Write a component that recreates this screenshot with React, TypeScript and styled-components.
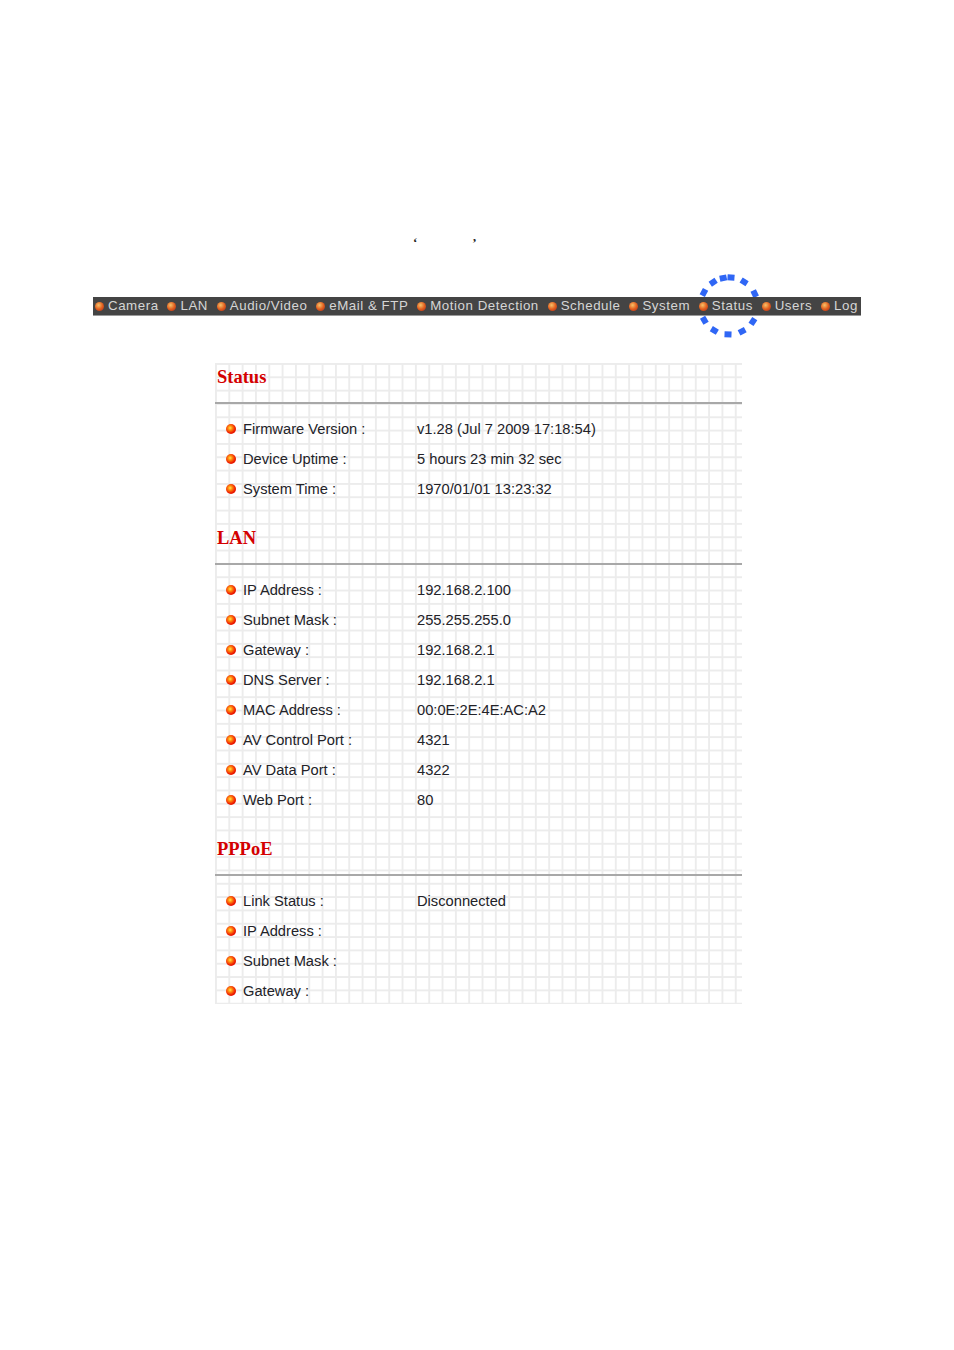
import React from "react";
import styled, { createGlobalStyle } from "styled-components";

const Global = createGlobalStyle`
  html, body { margin: 0; padding: 0; background: #ffffff; }
  body { font-family: "Liberation Sans", Arial, sans-serif; }
`;

const Page = styled.div`
  width: 954px;
  height: 1350px;
  padding-top: 236px;
  box-sizing: border-box;
  display: flex;
  flex-direction: column;
`;

const Marks = styled.div`
  height: 14px;
  padding-left: 413px;
  display: flex;
  gap: 55px;
  font-family: "Liberation Serif", serif;
  font-weight: bold;
  font-size: 13px;
  line-height: 14px;
  color: #222;
`;

const NavWrap = styled.div`
  position: relative;
  margin: 47px 0 0 93px;
  width: 768px;
`;

const NavBar = styled.nav`
  position: relative;
  z-index: 1;
  height: 18px;
  background: #444444;
  border-bottom: 1px solid #9a9a9a;
  display: flex;
  align-items: center;
  justify-content: space-between;
  padding: 0 3px 0 2px;
`;

const NavItem = styled.div`
  position: relative;
  display: flex;
  align-items: center;
  gap: 4px;
  font-size: 13.3px;
  letter-spacing: 0.55px;
  color: #d6d6d6;
  line-height: 18px;
  white-space: nowrap;
`;

const NavDot = styled.span`
  width: 9px;
  height: 9px;
  border-radius: 50%;
  flex: none;
  background: radial-gradient(circle at 40% 35%, #f6c26a 0%, #e2601f 50%, #a8261a 100%);
`;

const Halo = styled.svg`
  position: absolute;
  z-index: 0;
  left: 601px;
  top: -26px;
  width: 70px;
  height: 70px;
  overflow: visible;
`;

const Panel = styled.section`
  margin: 47px 0 0 215px;
  width: 527px;
  height: 641px;
  box-sizing: border-box;
  background-color: #ffffff;
  background-image:
    linear-gradient(to right, #ececec 1.5px, transparent 1.5px),
    linear-gradient(to bottom, #ececec 1.5px, transparent 1.5px);
  background-size: 13.33px 13.33px;
  background-position: 0 0;
  display: flex;
  flex-direction: column;
`;

const Section = styled.div<{ $first?: boolean }>`
  display: flex;
  flex-direction: column;
  margin-top: ${(p) => (p.$first ? "0" : "20px")};
`;

const Heading = styled.h2`
  margin: 0;
  height: 28px;
  padding-left: 2px;
  font-family: "Liberation Serif", "Times New Roman", serif;
  font-weight: bold;
  font-size: 18.5px;
  line-height: 28px;
  color: #d40000;
`;

const Rule = styled.div`
  margin-top: 11px;
  height: 2px;
  background: #a8a8a8;
`;

const Rows = styled.div`
  margin-top: 10px;
  display: flex;
  flex-direction: column;
`;

const Row = styled.div`
  height: 30px;
  display: flex;
  align-items: center;
  padding-left: 11px;
  font-size: 14.7px;
  color: #222228;
`;

const Dot = styled.span`
  width: 10px;
  height: 10px;
  border-radius: 50%;
  flex: none;
  margin-right: 7px;
  background: radial-gradient(circle at 42% 40%, #ffe84a 0%, #ff8a10 25%, #ee1c00 60%, #c80000 100%);
`;

const Label = styled.span`
  width: 174px;
  flex: none;
  white-space: nowrap;
`;

const Value = styled.span`
  white-space: nowrap;
`;

const navItems = [
  "Camera",
  "LAN",
  "Audio/Video",
  "eMail & FTP",
  "Motion Detection",
  "Schedule",
  "System",
  "Status",
  "Users",
  "Log",
];

type Entry = [string, string];

const sections: { title: string; rows: Entry[] }[] = [
  {
    title: "Status",
    rows: [
      ["Firmware Version :", "v1.28 (Jul 7 2009 17:18:54)"],
      ["Device Uptime :", "5 hours 23 min 32 sec"],
      ["System Time :", "1970/01/01 13:23:32"],
    ],
  },
  {
    title: "LAN",
    rows: [
      ["IP Address :", "192.168.2.100"],
      ["Subnet Mask :", "255.255.255.0"],
      ["Gateway :", "192.168.2.1"],
      ["DNS Server :", "192.168.2.1"],
      ["MAC Address :", "00:0E:2E:4E:AC:A2"],
      ["AV Control Port :", "4321"],
      ["AV Data Port :", "4322"],
      ["Web Port :", "80"],
    ],
  },
  {
    title: "PPPoE",
    rows: [
      ["Link Status :", "Disconnected"],
      ["IP Address :", ""],
      ["Subnet Mask :", ""],
      ["Gateway :", ""],
    ],
  },
];

const haloAngles = [-151.7, -123.7, -101.7, -86, -58, -25.6, 33, 62.5, 92, 121, 150];

function HaloRing() {
  const cx = 35;
  const cy = 35;
  const r = 28.5;
  return (
    <Halo viewBox="0 0 70 70">
      {haloAngles.map((a) => {
        const rad = (a * Math.PI) / 180;
        const x = cx + r * Math.cos(rad);
        const y = cy + r * Math.sin(rad);
        return (
          <rect
            key={a}
            x={x - 3.5}
            y={y - 3}
            width={7}
            height={6}
            fill="#2f66f5"
            transform={`rotate(${a + 90} ${x} ${y})`}
          />
        );
      })}
    </Halo>
  );
}

export default function App() {
  return (
    <>
      <Global />
      <Page>
        <Marks>
          <span>‘</span>
          <span>’</span>
        </Marks>
        <NavWrap>
          <HaloRing />
          <NavBar>
            {navItems.map((n) => (
              <NavItem key={n}>
                <NavDot />
                {n}
              </NavItem>
            ))}
          </NavBar>
        </NavWrap>
        <Panel>
          {sections.map((s, i) => (
            <Section key={s.title} $first={i === 0}>
              <Heading>{s.title}</Heading>
              <Rule />
              <Rows>
                {s.rows.map(([l, v]) => (
                  <Row key={l}>
                    <Dot />
                    <Label>{l}</Label>
                    <Value>{v}</Value>
                  </Row>
                ))}
              </Rows>
            </Section>
          ))}
        </Panel>
      </Page>
    </>
  );
}
